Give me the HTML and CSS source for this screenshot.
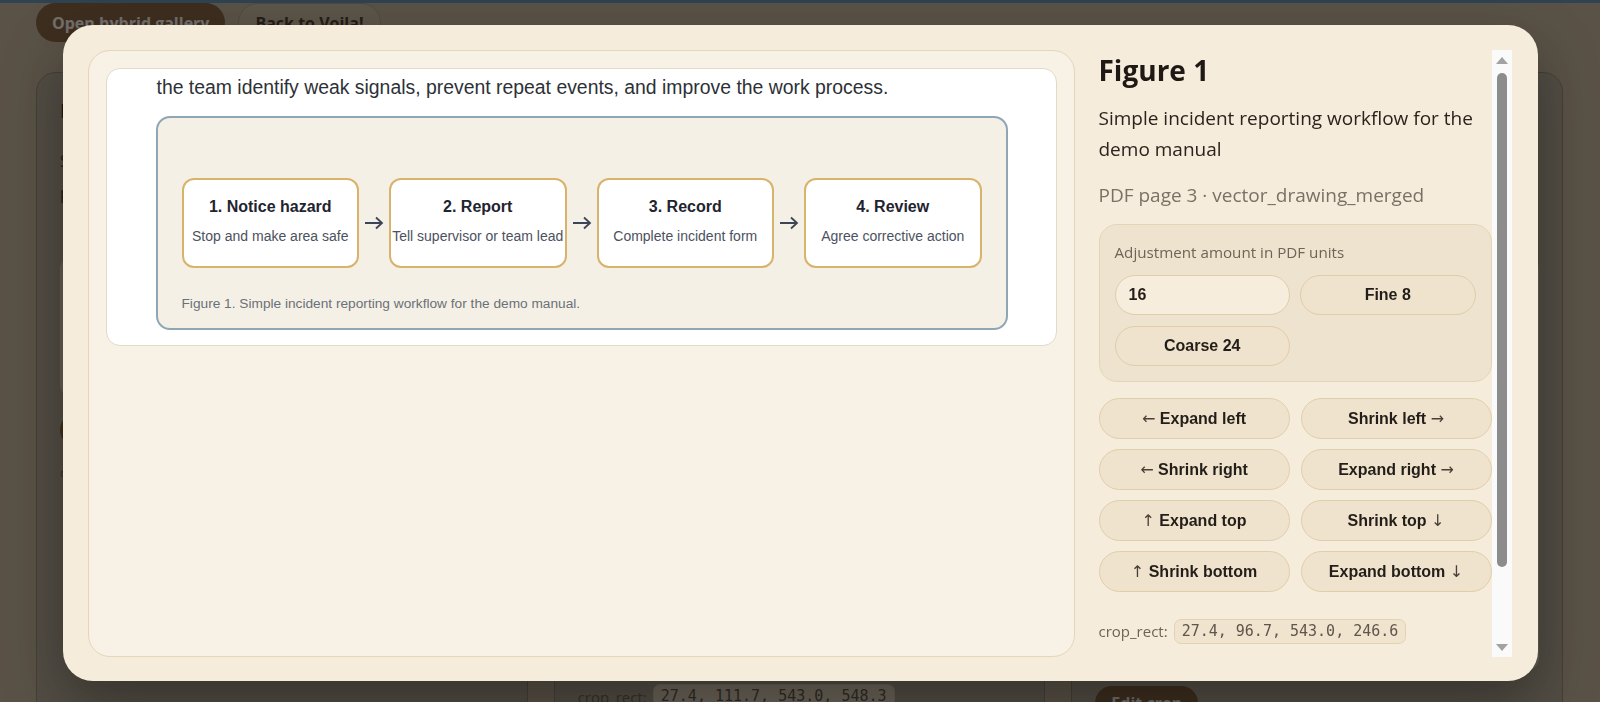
FILE: index.html
```html
<!DOCTYPE html>
<html lang="en">
<head>
    <meta charset="UTF-8">
    <title>Figure crop</title>
    <link rel="stylesheet" href="styles.css">
</head>
<body>
<div class="topbar"></div>
<header class="page-head">
    <button class="btn-dark">Open hybrid gallery</button>
    <button class="btn-ghost">Back to Voila!</button>
</header>

<main class="gallery">
    <article class="fig-card">
        <h3>Incident reporting</h3>
        <p>Simple incident reporting workflow for the demo manual, page 3 of the source document.</p>
        <div class="preview p1"></div>
        <button class="btn-dark edit">Edit crop</button>
        <div class="crop">crop_rect: <code>27.4, 96.7, 543.0, 246.6</code></div>
    </article>
    <article class="fig-card">
        <h3>Reporting form</h3>
        <p>Sample incident form with supervisor sign-off fields.</p>
        <div class="preview p2"></div>
        <button class="btn-dark edit">Edit crop</button>
        <div class="crop">crop_rect: <code>27.4, 111.7, 543.0, 548.3</code></div>
    </article>
    <article class="fig-card">
        <h3>Review checklist</h3>
        <p>Corrective action checklist used during the weekly review.</p>
        <div class="preview p3"></div>
        <button class="btn-dark edit">Edit crop</button>
        <div class="crop">crop_rect: <code>30.0, 80.2, 540.0, 600.1</code></div>
    </article>
</main>

<div class="overlay">
    <div class="modal">
        <section class="viewer">
            <div class="page-crop">
                <p class="page-text">the team identify weak signals, prevent repeat events, and improve the work process.</p>
                <figure class="flow">
                    <div class="steps">
                        <div class="step"><strong>1. Notice hazard</strong><span>Stop and make area safe</span></div>
                        <div class="arrow"><svg width="20" height="14" viewBox="0 0 20 14"><path d="M1 7H18M12 1.5L18 7L12 12.5" fill="none" stroke="#3c4555" stroke-width="1.8"/></svg></div>
                        <div class="step"><strong>2. Report</strong><span>Tell supervisor or team lead</span></div>
                        <div class="arrow"><svg width="20" height="14" viewBox="0 0 20 14"><path d="M1 7H18M12 1.5L18 7L12 12.5" fill="none" stroke="#3c4555" stroke-width="1.8"/></svg></div>
                        <div class="step"><strong>3. Record</strong><span>Complete incident form</span></div>
                        <div class="arrow"><svg width="20" height="14" viewBox="0 0 20 14"><path d="M1 7H18M12 1.5L18 7L12 12.5" fill="none" stroke="#3c4555" stroke-width="1.8"/></svg></div>
                        <div class="step"><strong>4. Review</strong><span>Agree corrective action</span></div>
                    </div>
                    <figcaption>Figure 1. Simple incident reporting workflow for the demo manual.</figcaption>
                </figure>
            </div>
        </section>

        <aside class="side">
            <div class="side-body">
                <h2>Figure 1</h2>
                <p class="side-desc">Simple incident reporting workflow for the demo manual</p>
                <p class="side-meta">PDF page 3 · vector_drawing_merged</p>

                <div class="amount">
                    <label for="amount">Adjustment amount in PDF units</label>
                    <div class="amount-grid">
                        <input id="amount" value="16">
                        <button>Fine 8</button>
                        <button>Coarse 24</button>
                    </div>
                </div>

                <div class="nudges">
                    <button><i class="ar">←</i> Expand left</button>
                    <button>Shrink left <i class="ar">→</i></button>
                    <button><i class="ar">←</i> Shrink right</button>
                    <button>Expand right <i class="ar">→</i></button>
                    <button><i class="ar">↑</i> Expand top</button>
                    <button>Shrink top <i class="ar">↓</i></button>
                    <button><i class="ar">↑</i> Shrink bottom</button>
                    <button>Expand bottom <i class="ar">↓</i></button>
                </div>

                <div class="crop side-crop">crop_rect: <code>27.4, 96.7, 543.0, 246.6</code></div>
            </div>
            <div class="scrollbar">
                <div class="sb-btn"><svg width="12" height="7" viewBox="0 0 12 7"><path d="M0 7L6 0L12 7Z" fill="#a2a2a2"/></svg></div>
                <div class="sb-thumb"></div>
                <div class="sb-space"></div>
                <div class="sb-btn"><svg width="12" height="7" viewBox="0 0 12 7"><path d="M0 0L6 7L12 0Z" fill="#a2a2a2"/></svg></div>
            </div>
        </aside>
    </div>
</div>
</body>
</html>
```

FILE: styles.css
```css
body {
    margin: 0;
    height: 702px;
    overflow: hidden;
    background: #c3b5a0;
    font-family: "Open Sans", "Noto Sans", sans-serif;
    color: #2b241d;
}

/* page behind the dialog */
.topbar {
    height: 3px;
    background: #5a8fbb;
}
.page-head {
    display: flex;
    gap: 13px;
    padding: 0 36px;
}
.btn-dark,
.btn-ghost {
    height: 39px;
    padding: 0 16px;
    border-radius: 20px;
    font: 700 16px "Open Sans", sans-serif;
}
.btn-dark {
    border: 0;
    background: #7d5b3c;
    color: #ffffff;
}
.btn-ghost {
    border: 1px solid #aa9e8e;
    background: #c9bca7;
    color: #3a322a;
}
.gallery {
    display: grid;
    grid-template-columns: repeat(3, 1fr);
    gap: 26px;
    padding: 0 37px 0 36px;
    margin-top: 30px;
}
.fig-card {
    height: 700px;
    box-sizing: border-box;
    padding: 24px 23px;
    background: #b2a99a;
    border: 1px solid #918879;
    border-radius: 20px;
}
.fig-card h3 {
    margin: 0;
    font-size: 20px;
    line-height: 28px;
    color: #2a241e;
}
.fig-card p {
    height: 96px;
    margin: 20px 0 0;
    overflow: hidden;
    font-size: 16px;
    line-height: 32px;
    color: #3a332b;
}
.preview {
    margin-top: 16px;
    background: #d8d0c2;
    border-radius: 12px;
}
.p1 { height: 140px; }
.p2 { height: 365px; }
.p3 { height: 413px; }
.fig-card .edit {
    display: block;
    height: 34px;
    margin-top: 16px;
    padding: 0 16px;
}
.crop {
    display: flex;
    align-items: center;
    gap: 6px;
    margin-top: 12px;
    font-size: 15px;
    color: #6f6456;
}
.crop code {
    padding: 0 7px;
    font: 15px/23px "DejaVu Sans Mono", monospace;
    color: #5e554b;
    background: #f0e4cf;
    border: 1px solid #e2d2b4;
    border-radius: 7px;
}

/* dialog */
.overlay {
    position: fixed;
    top: 0;
    left: 0;
    right: 0;
    bottom: 0;
    display: flex;
    justify-content: center;
    align-items: flex-start;
    padding-top: 25px;
    background: rgba(20, 16, 12, 0.6);
}
.modal {
    display: grid;
    grid-template-columns: 987px 413px;
    column-gap: 24px;
    width: 1475px;
    height: 656px;
    box-sizing: border-box;
    padding: 25px 26px 24px 25px;
    background: #f5ecdb;
    border-radius: 30px;
    box-shadow: 0 24px 60px rgba(0, 0, 0, 0.35);
}
.viewer {
    box-sizing: border-box;
    padding: 17px;
    background: #f8f1e5;
    border: 1px solid #e6d6b9;
    border-radius: 22px;
}
.page-crop {
    height: 278px;
    box-sizing: border-box;
    padding: 7px 48px 0 49px;
    overflow: hidden;
    background: #ffffff;
    border: 1px solid #e3d9c7;
    border-radius: 14px;
    font-family: "Liberation Sans", Arial, sans-serif;
}
.page-text {
    margin: 0;
    padding-left: 1px;
    font-size: 19.4px;
    line-height: 22px;
    color: #2d3137;
    white-space: nowrap;
}
.flow {
    height: 214px;
    box-sizing: border-box;
    margin: 18px 0 0;
    padding: 60px 24px 0;
    background: #f5f0e6;
    border: 2px solid #8fa7b4;
    border-radius: 14px;
}
.steps {
    display: flex;
    align-items: center;
    height: 90px;
}
.step {
    flex: 1;
    min-width: 0;
    height: 90px;
    box-sizing: border-box;
    padding-top: 17px;
    text-align: center;
    background: #ffffff;
    border: 2px solid #d8b36c;
    border-radius: 12px;
}
.step strong {
    display: block;
    font-size: 16px;
    line-height: 20px;
    color: #1f2430;
}
.step span {
    display: block;
    margin-top: 10px;
    font-size: 14px;
    line-height: 18px;
    color: #4b5260;
    white-space: nowrap;
}
.arrow {
    flex: none;
    display: flex;
    justify-content: center;
    width: 30px;
}
.flow figcaption {
    margin-top: 28px;
    font-size: 13.7px;
    line-height: 16px;
    color: #6b7078;
}

/* side panel */
.side {
    display: flex;
    min-height: 0;
    overflow: hidden;
}
.side-body {
    flex: 1;
    min-width: 0;
    overflow: hidden;
}
.side-body h2 {
    margin: 4px 0 0;
    font-size: 28px;
    line-height: 1.2;
    color: #1e1914;
}
.side-desc,
.side-meta {
    margin: 15px 0 0;
    font-size: 19px;
    line-height: 31px;
}
.side-desc { color: #2b241d; }
.side-meta { color: #7b7065; }
.amount {
    margin-top: 13px;
    padding: 16px 15px 15px;
    background: #eee3ce;
    border: 1px solid #e4d4b6;
    border-radius: 18px;
}
.amount label {
    display: block;
    font-size: 15.2px;
    line-height: 22px;
    color: #6f6456;
}
.amount-grid {
    display: grid;
    grid-template-columns: 1fr 1fr;
    gap: 11px 10px;
    margin-top: 12px;
}
.amount input,
.amount button,
.nudges button {
    box-sizing: border-box;
    border: 1px solid #e0cdaa;
    border-radius: 999px;
    font: 700 16px "Liberation Sans", Arial, sans-serif;
    color: #231e19;
}
.amount input,
.amount button {
    height: 40px;
}
.amount input {
    width: 100%;
    padding: 0 13px;
    background: #f6eddd;
    outline: none;
}
.amount button {
    background: #efe3cd;
}
.nudges {
    display: grid;
    grid-template-columns: 1fr 1fr;
    gap: 10px 11px;
    margin-top: 16px;
}
.nudges button {
    height: 41px;
    background: #efe3cd;
}
.ar {
    font: normal 16px "DejaVu Sans", sans-serif;
    color: #4a4038;
}
.side-crop {
    margin-top: 27px;
}

/* scrollbar of the side panel */
.scrollbar {
    flex: none;
    display: flex;
    flex-direction: column;
    align-items: center;
    width: 20px;
    background: #fafafa;
}
.sb-btn {
    display: flex;
    align-items: center;
    justify-content: center;
    height: 20px;
}
.sb-thumb {
    width: 10px;
    height: 494px;
    margin-top: 3px;
    background: #8c8c8c;
    border-radius: 5px;
}
.sb-space {
    flex: 1;
}
```
